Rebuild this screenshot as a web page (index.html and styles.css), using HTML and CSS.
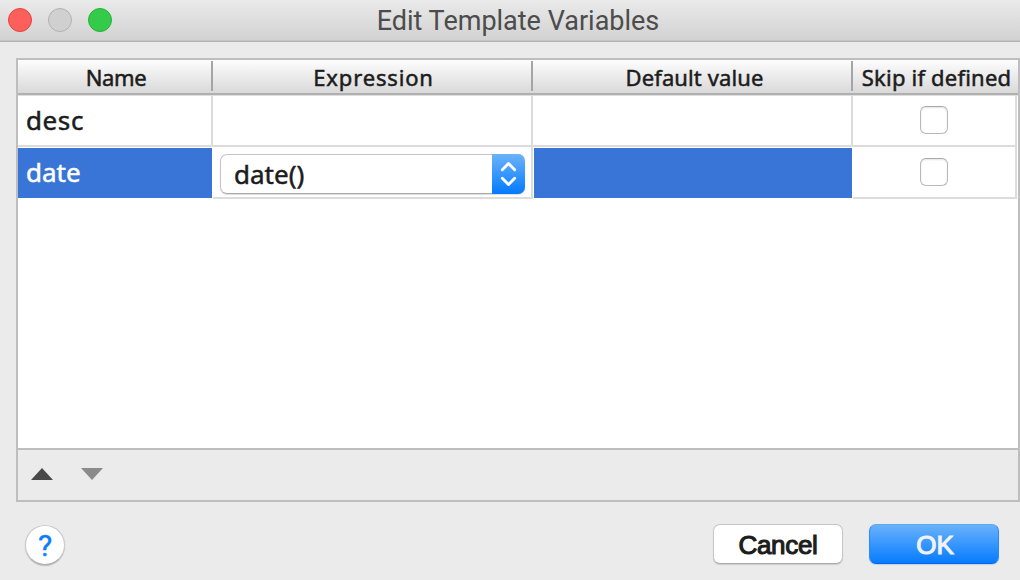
FILE: index.html
```html
<!DOCTYPE html>
<html lang="en">
<head>
<meta charset="utf-8">
<title>Edit Template Variables</title>
<link rel="stylesheet" href="styles.css">
</head>
<body>
<div class="dialog">
  <header class="titlebar">
    <div class="lights"><i class="light close"></i><i class="light minimize"></i><i class="light zoom"></i></div>
    <h1 class="title">Edit Template Variables</h1>
  </header>
  <main class="panel">
    <div class="row head">
      <div class="th"><span class="h-name">Name</span></div>
      <div class="th"><span class="h-expression">Expression</span></div>
      <div class="th"><span class="h-default">Default value</span></div>
      <div class="th"><span class="h-skip">Skip if defined</span></div>
    </div>
    <div class="row">
      <div class="td"><span class="value first">desc</span></div>
      <div class="td"></div>
      <div class="td"></div>
      <div class="td check"><i class="box"></i></div>
    </div>
    <div class="row second">
      <div class="td selected"><span class="value">date</span></div>
      <div class="td editor">
        <div class="combo">
          <span class="combo-text">date()</span>
          <svg class="stepper" width="33" height="40" viewBox="0 0 33 40"><path d="M10.3 15.8 16.5 9.5 22.7 15.8M10.3 24.2 16.5 30.5 22.7 24.2"/></svg>
        </div>
      </div>
      <div class="td selected inset"></div>
      <div class="td check"><i class="box"></i></div>
    </div>
    <div class="empty"></div>
    <div class="toolbar">
      <svg width="22" height="12" viewBox="0 0 22 12"><path class="up" d="M0 12 11 0 22 12z"/></svg>
      <svg width="22" height="12" viewBox="0 0 22 12"><path class="down" d="M0 0H22L11 12z"/></svg>
    </div>
  </main>
  <footer class="footer">
    <div class="help"><span>?</span></div>
    <div class="button cancel"><span>Cancel</span></div>
    <div class="button ok"><span>OK</span></div>
  </footer>
</div>
</body>
</html>
```
FILE: styles.css
```css
* { box-sizing: border-box; }
body { margin: 0; font-family: "Noto Sans", "Open Sans", sans-serif; color: #1c1c1c; }
.dialog { width: 1020px; height: 580px; background: #ebebeb; overflow: hidden; display: flex; flex-direction: column; }
.titlebar { height: 42px; flex: none; display: grid; grid-template-columns: 120px 1fr 104px; background: linear-gradient(#eaeaea, #d2d2d2 40px, #c6c6c6 40px); border-bottom: 1px solid #b1b1b1; }
.lights { display: flex; gap: 16px; padding: 8px 0 0 8px; }
.light { width: 24px; height: 24px; border-radius: 50%; border: 1px solid; }
.close { background: #fd5f5b; border-color: #e2443f; }
.minimize { background: #d0d0d0; border-color: #b2b2b2; }
.zoom { background: #34cb4b; border-color: #26b03a; }
.title { margin: 0; text-align: center; font: 400 27px/43px Roboto, sans-serif; color: #4c4c4c; white-space: nowrap; }

.panel { margin: 16px 0 0 16px; width: 1004px; height: 444px; flex: none; border: 2px solid #bebebe; background: #fff; display: flex; flex-direction: column; }
.row { display: grid; grid-template-columns: 195px 320px 320px 164px; height: 51px; flex: none; }
.head { height: 36px; background: linear-gradient(#fdfdfd, #d9d9d9 33px, #b0b0b0 33px, #b0b0b0 35px, #dedede 35px); grid-template-columns: 195px 320px 320px 165px; }
.th { display: flex; justify-content: center; height: 30px; margin-top: 1px; border-right: 2px solid #a5a5a5; font-size: 22px; line-height: 32px; white-space: nowrap; -webkit-text-stroke: 0.5px; }
.th:last-child { border-right: 0; }
.h-name { padding-left: 3px; letter-spacing: -0.4px; }
.h-expression { padding-left: 3px; letter-spacing: 0.85px; }
.h-default { padding-left: 5px; letter-spacing: 0.1px; }
.h-skip { padding-left: 2px; letter-spacing: 0.2px; }
.td { border-right: 2px solid #dcdcdc; border-bottom: 2px solid #dcdcdc; min-width: 0; }
.value { display: block; padding-left: 8px; font-size: 26px; line-height: 49px; -webkit-text-stroke: 0.5px; }
.first { letter-spacing: 0.6px; }
.second { height: 52px; }
.selected { margin: 1px 1px 1px 0; border: 0; background: #3975d7; color: #fff; }
.selected .value { line-height: 48px; }
.inset { margin-left: 1px; }
.editor { padding: 7px 0 0 7px; }
.combo { width: 305px; height: 40px; display: flex; border: 1px solid #c4c4c4; border-bottom-color: #aaa; border-right: 0; border-radius: 7px; box-shadow: 0 1px 1px #ddd; }
.combo-text { flex: 1; padding-left: 13px; font-size: 26px; line-height: 39px; -webkit-text-stroke: 0.5px; }
.stepper { margin: -1px 0; border-radius: 0 7px 7px 0; background: linear-gradient(#6bb3fa, #047aff); }
.stepper path { fill: none; stroke: #fff; stroke-width: 2.9; stroke-linecap: round; stroke-linejoin: round; }
.check { display: flex; justify-content: center; padding-top: 10px; }
.second .check { padding-top: 11px; }
.box { width: 28px; height: 28px; border: 1px solid #b8b8b8; border-top-color: #a8a8a8; border-radius: 6px; box-shadow: inset 0 1px 2px #e4e4e4; }
.empty { flex: 1; }
.toolbar { height: 52px; flex: none; display: flex; gap: 28px; padding: 18px 0 0 13px; background: #ebebeb; border-top: 2px solid #bebebe; }
.up { fill: #494949; }
.down { fill: #8b8b8b; }

.footer { display: flex; padding: 22px 21px 0 25px; }
.help { width: 40px; height: 40px; margin-top: 1px; border-radius: 50%; background: #fff; border: 1px solid #cacaca; border-bottom-color: #b0b0b0; box-shadow: 0 1px 1px #bbb; text-align: center; color: #087dff; font: 400 30px/39px Roboto, sans-serif; -webkit-text-stroke: 0.4px; }
.button { width: 130px; height: 40px; border-radius: 7px; text-align: center; font: 26px/40px "Liberation Sans", Arial, sans-serif; -webkit-text-stroke: 1.1px; }
.cancel { margin-left: auto; background: #fff; border: 1px solid #c6c6c6; border-bottom-color: #acacac; box-shadow: 0 1px 1px #ccc; letter-spacing: -0.3px; }
.ok { margin-left: 26px; padding-left: 2px; background: linear-gradient(#6bb3fa, #047aff); border: 1px solid; border-color: #5ba6f5 #2c8af8 #0068e8; background-origin: border-box; box-shadow: 0 1px 1px #c4cedd; color: #f0f3fa; }
```
